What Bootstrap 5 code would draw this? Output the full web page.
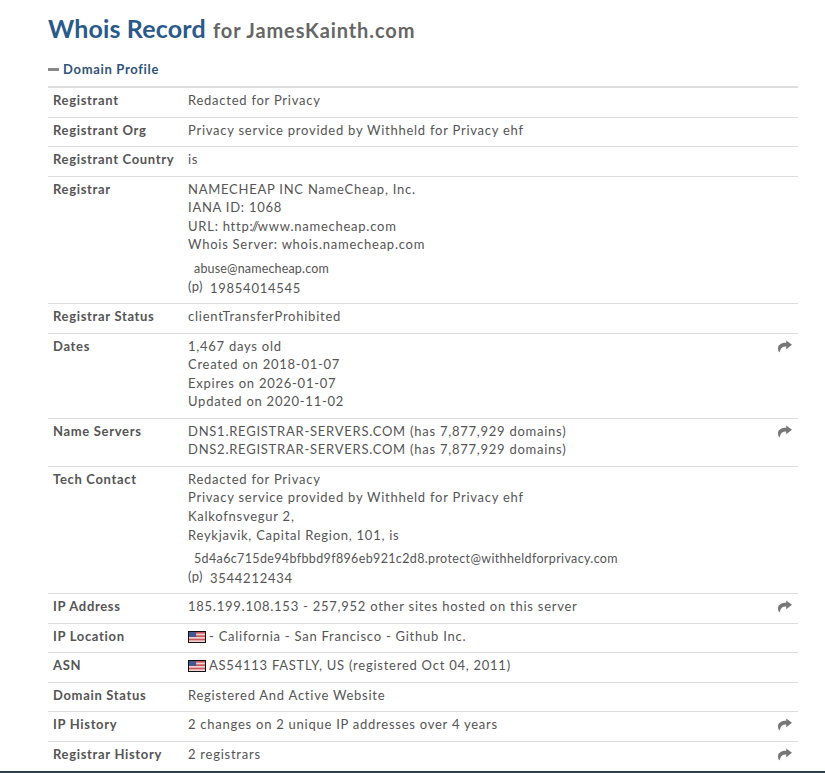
<!DOCTYPE html>
<html lang="en">
<head>
<meta charset="utf-8">
<title>Whois Record</title>
<link rel="stylesheet" href="https://cdn.jsdelivr.net/npm/bootstrap@5.3.0/dist/css/bootstrap.min.css">
<style>
html,body{height:773px;overflow:hidden;background:#fff}
body{font-family:Lato,sans-serif;color:#555;font-size:13px;letter-spacing:.75px}
.page-wrap{padding:11px 27px 0 48px;height:773px}
.page-title{font-size:25px;font-weight:700;line-height:34px;color:#2a5a8a;margin:0 0 13px;letter-spacing:.15px}
.page-title span{font-size:20px;color:#666;letter-spacing:.9px;margin-left:1px}
.section-head{font-size:13px;font-weight:700;color:#2f5379;line-height:18px;margin:0 0 8px;display:flex;align-items:center;gap:4px;letter-spacing:.68px}
.minus-mark{display:inline-block;width:11px;height:3px;background:#888}
.whois-table{width:100%;border-top:2px solid #ddd;margin:0;table-layout:fixed;--bs-table-color:#555;--bs-table-border-color:#ddd}
.whois-table td,.whois-table th{padding:3px 5px 7px;line-height:18.57px;font-size:13px;vertical-align:top;border-bottom:1px solid #ddd;box-shadow:none}
.whois-table th{width:135px;font-weight:700;color:#555;white-space:nowrap;letter-spacing:.67px}
.whois-table td{position:relative}
.contact-block{margin-top:5px}
.mail-line{padding-left:6px;letter-spacing:.17px;font-size:12.5px;color:#555;line-height:20px}
.mail-long{letter-spacing:.36px}
.phone-line{line-height:19px;margin-bottom:-2px}
.phone-tag{font-size:13px;margin-right:7px;letter-spacing:.4px;position:relative;top:-2px}
.url-tight{letter-spacing:-1.25px}
.share-mark{position:absolute;right:6px;top:6px;width:14px;height:13px;fill:#777}
.flag-mark{display:inline-block;width:18px;height:12px;vertical-align:-2px;border:1px solid #111;margin-right:3px}
.bottom-rule{position:absolute;left:0;right:0;top:771px;height:2px;background:#2b3e4d}
</style>
</head>
<body>
<svg width="0" height="0" class="d-block position-absolute">
<defs>
<symbol id="arrow" viewBox="0 0 14 13"><path d="M8.2 0.4 L14 4.8 L8.2 9.2 L8.2 6.6 C5 6.6 2.8 7.4 1.6 12.6 C0.5 11.4 0 9.8 0 8.4 C0 4.6 3.6 2.8 8.2 2.8 Z"/></symbol>
<symbol id="usflag" viewBox="0 0 18 12" preserveAspectRatio="none">
<rect width="18" height="12" fill="#f0d4d4"/>
<rect y="0" width="18" height="2" fill="#c9565a"/><rect y="4" width="18" height="2" fill="#c9565a"/><rect y="8" width="18" height="2" fill="#c9565a"/>
<rect width="8" height="6" fill="#46568f"/>
</symbol>
</defs>
</svg>
<div class="page-wrap">
<h1 class="page-title">Whois Record <span>for JamesKainth.com</span></h1>
<div class="section-head"><span class="minus-mark"></span>Domain Profile</div>
<table class="table whois-table">
<tbody>
<tr><th>Registrant</th><td>Redacted for Privacy</td></tr>
<tr><th>Registrant Org</th><td>Privacy service provided by Withheld for Privacy ehf</td></tr>
<tr><th>Registrant Country</th><td>is</td></tr>
<tr><th>Registrar</th><td>NAMECHEAP INC NameCheap, Inc.<br>IANA ID: 1068<br>URL: http<span class="url-tight">://</span>www.namecheap.com<br>Whois Server: whois.namecheap.com
<div class="contact-block"><div class="mail-line">abuse@namecheap.com</div><div class="phone-line"><span class="phone-tag">(p)</span>19854014545</div></div></td></tr>
<tr><th>Registrar Status</th><td>clientTransferProhibited</td></tr>
<tr><th>Dates</th><td>1,467 days old<br>Created on 2018-01-07<br>Expires on 2026-01-07<br>Updated on 2020-11-02<svg class="share-mark"><use href="#arrow"/></svg></td></tr>
<tr><th>Name Servers</th><td>DNS1.REGISTRAR-SERVERS.COM (has 7,877,929 domains)<br>DNS2.REGISTRAR-SERVERS.COM (has 7,877,929 domains)<svg class="share-mark"><use href="#arrow"/></svg></td></tr>
<tr><th>Tech Contact</th><td>Redacted for Privacy<br>Privacy service provided by Withheld for Privacy ehf<br>Kalkofnsvegur 2,<br>Reykjavik, Capital Region, 101, is
<div class="contact-block"><div class="mail-line mail-long">5d4a6c715de94bfbbd9f896eb921c2d8.protect@withheldforprivacy.com</div><div class="phone-line"><span class="phone-tag">(p)</span>3544212434</div></div></td></tr>
<tr><th>IP Address</th><td>185.199.108.153 - 257,952 other sites hosted on this server<svg class="share-mark"><use href="#arrow"/></svg></td></tr>
<tr><th>IP Location</th><td><svg class="flag-mark"><use href="#usflag"/></svg>- California - San Francisco - Github Inc.</td></tr>
<tr><th>ASN</th><td><svg class="flag-mark"><use href="#usflag"/></svg>AS54113 FASTLY, US (registered Oct 04, 2011)</td></tr>
<tr><th>Domain Status</th><td>Registered And Active Website</td></tr>
<tr><th>IP History</th><td>2 changes on 2 unique IP addresses over 4 years<svg class="share-mark"><use href="#arrow"/></svg></td></tr>
<tr><th>Registrar History</th><td>2 registrars<svg class="share-mark"><use href="#arrow"/></svg></td></tr>
</tbody>
</table>
</div>
<div class="bottom-rule"></div>
<script src="https://cdn.jsdelivr.net/npm/bootstrap@5.3.0/dist/js/bootstrap.bundle.min.js"></script>
</body>
</html>
